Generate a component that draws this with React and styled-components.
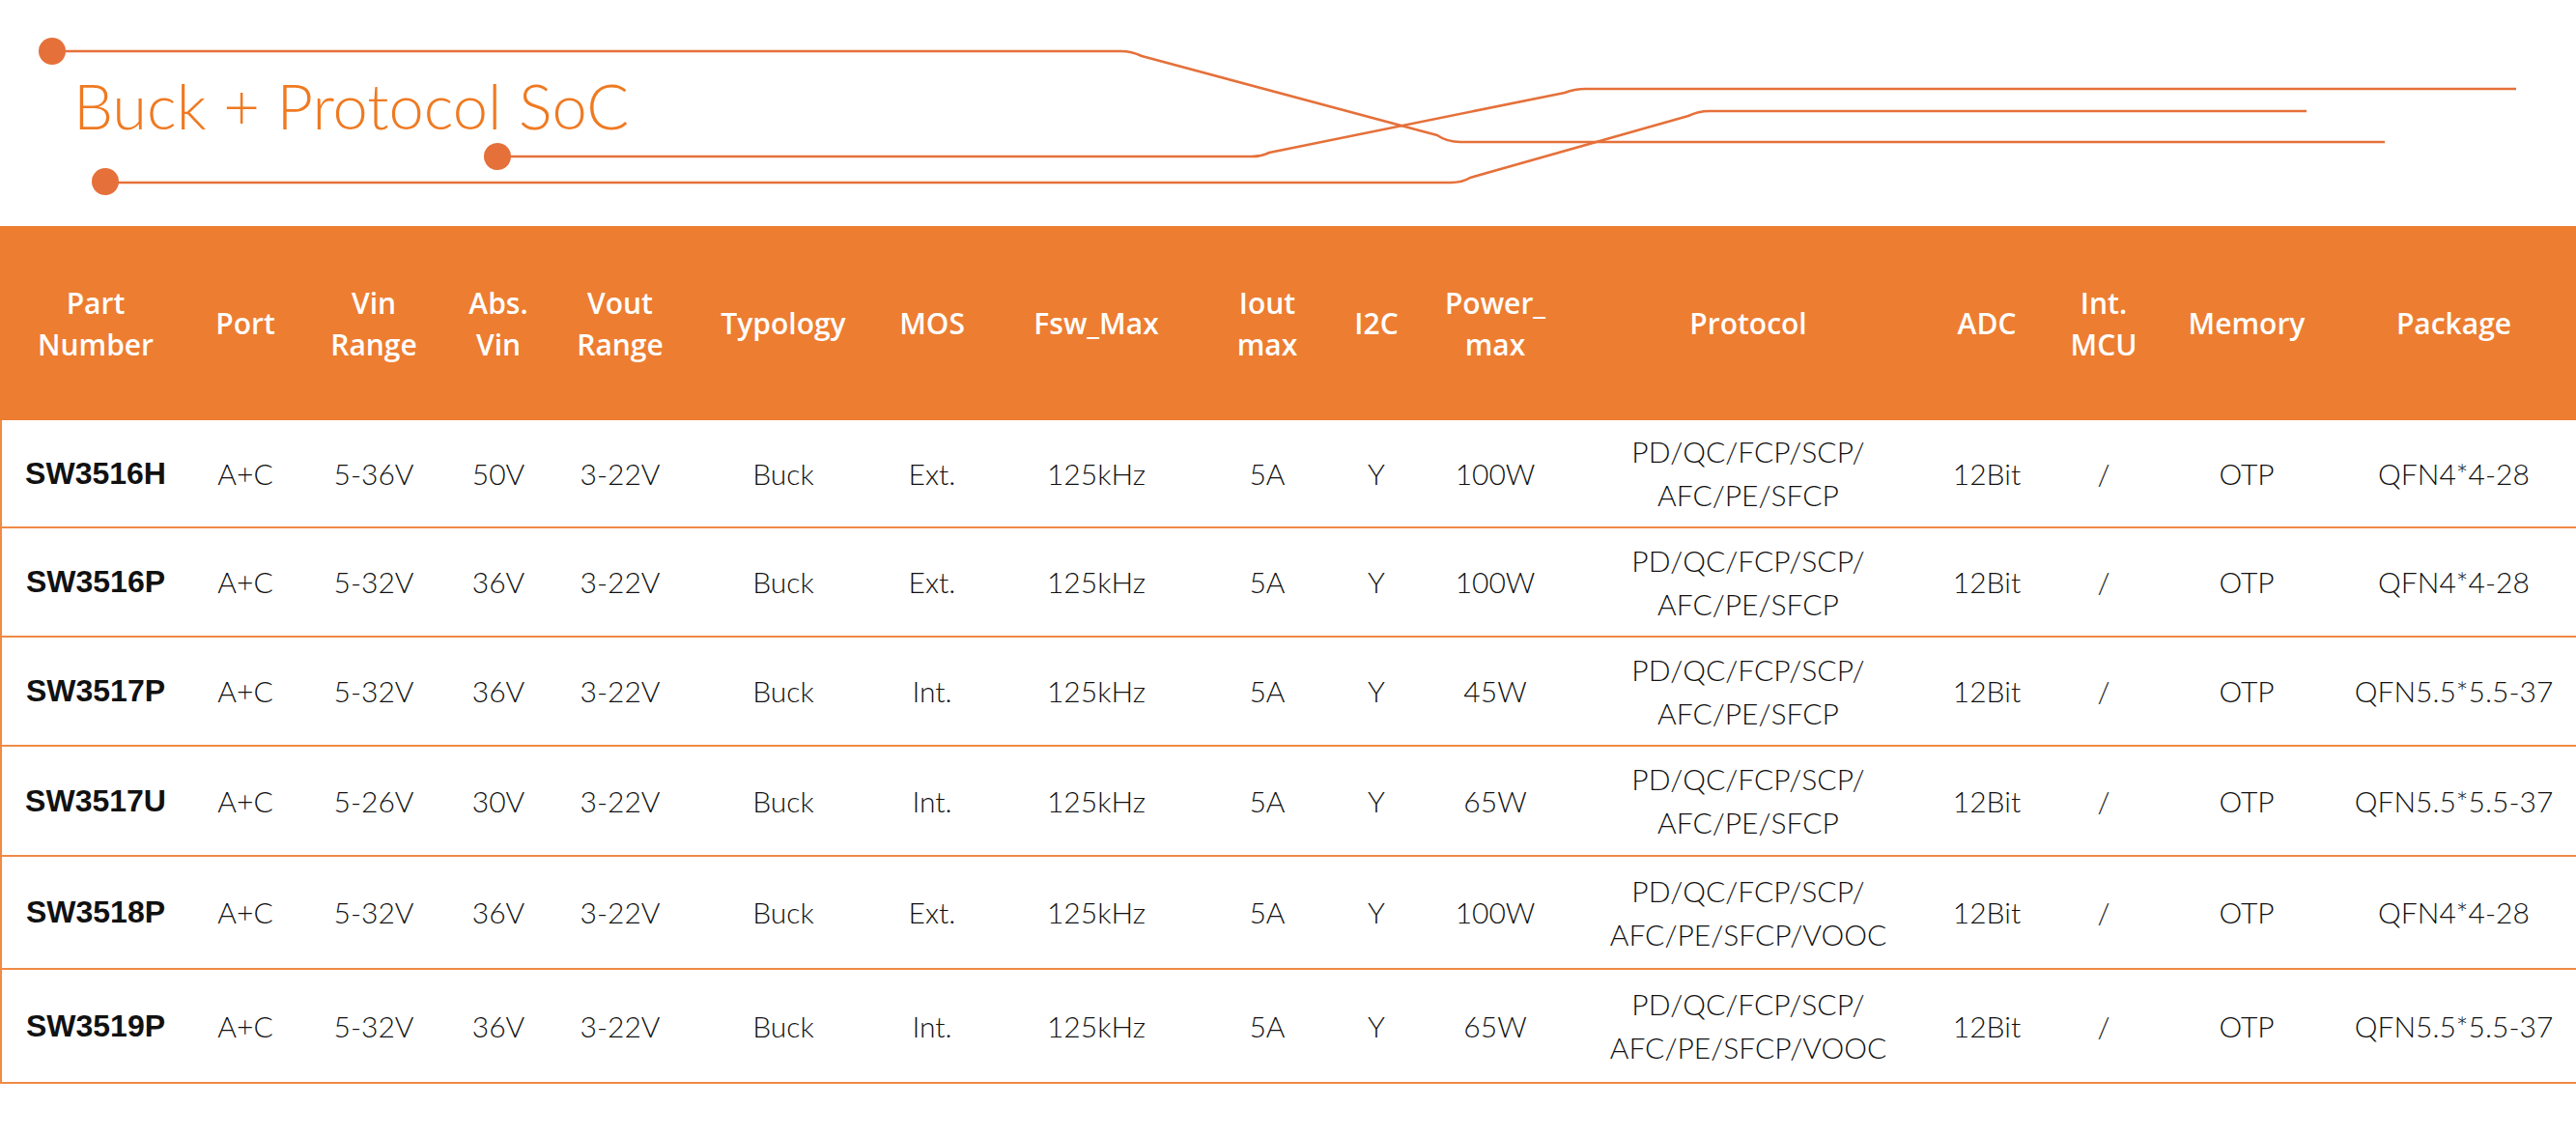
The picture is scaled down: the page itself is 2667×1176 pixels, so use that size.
import styled, { createGlobalStyle } from "styled-components";

const GlobalStyle = createGlobalStyle`
    html, body {
        margin: 0;
        padding: 0;
        background: #ffffff;
    }
`;

const ORANGE = "#ED7D31";
const LINE = "#E5703A";
const RULE = "#F08A45";

const columns = [198, 112, 154, 104, 148, 190, 118, 222, 132, 94, 152, 372, 122, 120, 176, 253];

const headers = [
    ["Part", "Number"],
    ["Port"],
    ["Vin", "Range"],
    ["Abs.", "Vin"],
    ["Vout", "Range"],
    ["Typology"],
    ["MOS"],
    ["Fsw_Max"],
    ["Iout", "max"],
    ["I2C"],
    ["Power_", "max"],
    ["Protocol"],
    ["ADC"],
    ["Int.", "MCU"],
    ["Memory"],
    ["Package"],
];

const BASE = ["PD/QC/FCP/SCP/", "AFC/PE/SFCP"];
const VOOC = ["PD/QC/FCP/SCP/", "AFC/PE/SFCP/VOOC"];

const parts = [
    { h: 112, cells: ["SW3516H", "A+C", "5-36V", "50V", "3-22V", "Buck", "Ext.", "125kHz", "5A", "Y", "100W", BASE, "12Bit", "/", "OTP", "QFN4*4-28"] },
    { h: 113, cells: ["SW3516P", "A+C", "5-32V", "36V", "3-22V", "Buck", "Ext.", "125kHz", "5A", "Y", "100W", BASE, "12Bit", "/", "OTP", "QFN4*4-28"] },
    { h: 113, cells: ["SW3517P", "A+C", "5-32V", "36V", "3-22V", "Buck", "Int.", "125kHz", "5A", "Y", "45W", BASE, "12Bit", "/", "OTP", "QFN5.5*5.5-37"] },
    { h: 114, cells: ["SW3517U", "A+C", "5-26V", "30V", "3-22V", "Buck", "Int.", "125kHz", "5A", "Y", "65W", BASE, "12Bit", "/", "OTP", "QFN5.5*5.5-37"] },
    { h: 117, cells: ["SW3518P", "A+C", "5-32V", "36V", "3-22V", "Buck", "Ext.", "125kHz", "5A", "Y", "100W", VOOC, "12Bit", "/", "OTP", "QFN4*4-28"] },
    { h: 118, cells: ["SW3519P", "A+C", "5-32V", "36V", "3-22V", "Buck", "Int.", "125kHz", "5A", "Y", "65W", VOOC, "12Bit", "/", "OTP", "QFN5.5*5.5-37"] },
];

// the circuit-trace decoration behind the title
const Traces = () => (
    <TraceSvg width="2667" height="234" viewBox="0 0 2667 234">
        <g fill="none" stroke={LINE} strokeWidth="2.6" strokeLinejoin="round">
            <path d="M54 53 H1160 Q1172 53 1182 58 L1488 140 Q1498 147 1512 147 H2469" />
            <path d="M515 162 H1296 Q1306 162 1314 158 L1620 96 Q1630 92 1642 92 H2605" />
            <path d="M109 189 H1502 Q1514 189 1522 184 L1748 120 Q1758 115 1770 115 H2388" />
        </g>
        <g fill={LINE}>
            <circle cx="54" cy="53" r="14" />
            <circle cx="515" cy="162" r="14" />
            <circle cx="109" cy="188" r="14" />
        </g>
    </TraceSvg>
);

const App = () => {
    return (
        <Page>
            <GlobalStyle />
            <Banner>
                <Traces />
                <Title>Buck + Protocol SoC</Title>
            </Banner>
            <HeadRow>
                {headers.map((lines, i) => (
                    <HeadCell key={i}>
                        {lines.map((l, j) => (
                            <span key={j}>{l}</span>
                        ))}
                    </HeadCell>
                ))}
            </HeadRow>
            <Body>
                {parts.map(p => (
                    <Row key={p.cells[0]} $h={p.h}>
                        {p.cells.map((c, i) => (
                            <Cell key={i} $bold={i === 0}>
                                {Array.isArray(c) ? c.map((l, j) => <span key={j}>{l}</span>) : c}
                            </Cell>
                        ))}
                    </Row>
                ))}
            </Body>
        </Page>
    );
};

export default App;

const Page = styled.div`
    width: 2667px;
    height: 1176px;
    background: #ffffff;
    overflow: hidden;
`;

const Banner = styled.div`
    position: relative;
    height: 234px;
    box-sizing: border-box;
    padding: 77px 0 0 76px;
`;

const TraceSvg = styled.svg`
    position: absolute;
    left: 0;
    top: 0;
`;

const Title = styled.h1`
    position: relative;
    margin: 0;
    font-family: Lato, "Open Sans", sans-serif;
    font-weight: 300;
    font-size: 65px;
    line-height: 1;
    color: #EF7A22;
    white-space: nowrap;
`;

const grid = columns.map(c => `${c}px`).join(" ");

const HeadRow = styled.div`
    display: grid;
    grid-template-columns: ${grid};
    height: 201px;
    background: ${ORANGE};
`;

const HeadCell = styled.div`
    display: flex;
    flex-direction: column;
    align-items: center;
    justify-content: center;
    font-family: "Open Sans", "Noto Sans", sans-serif;
    font-weight: 600;
    font-size: 30px;
    line-height: 43px;
    color: #ffffff;
    white-space: nowrap;
`;

const Body = styled.div`
    border-left: 2px solid ${RULE};
    width: 2667px;
    box-sizing: border-box;
`;

const Row = styled.div`
    display: grid;
    grid-template-columns: ${grid};
    height: ${p => p.$h}px;
    box-sizing: border-box;
    border-bottom: 2px solid ${RULE};
    margin-left: -2px;
`;

const Cell = styled.div`
    display: flex;
    flex-direction: column;
    align-items: center;
    justify-content: center;
    font-family: ${p => (p.$bold ? `"Liberation Sans", Arial, sans-serif` : `Lato, "Open Sans", sans-serif`)};
    font-weight: ${p => (p.$bold ? 700 : 300)};
    font-size: ${p => (p.$bold ? "32px" : "30px")};
    line-height: 45px;
    color: #111111;
    white-space: nowrap;
`;
